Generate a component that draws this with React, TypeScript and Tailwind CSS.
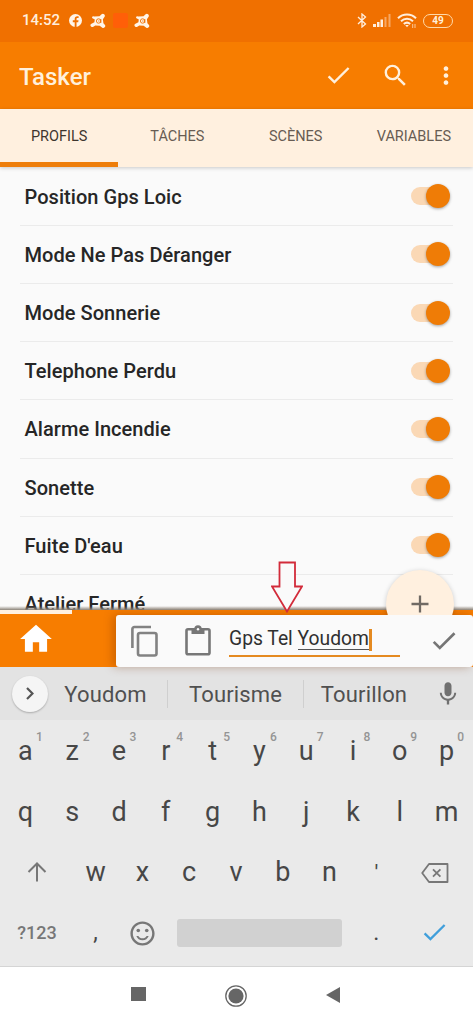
import { ReactNode } from "react";
import { MdSearch, MdMoreVert, MdHome, MdMic, MdOutlineSentimentSatisfiedAlt } from "react-icons/md";

const tabs = ["PROFILS", "TÂCHES", "SCÈNES", "VARIABLES"];

const profiles = [
  "Position Gps Loic",
  "Mode Ne Pas Déranger",
  "Mode Sonnerie",
  "Telephone Perdu",
  "Alarme Incendie",
  "Sonette",
  "Fuite D'eau",
  "Atelier Fermé",
];

const row1 = ["a", "z", "e", "r", "t", "y", "u", "i", "o", "p"];
const row2 = ["q", "s", "d", "f", "g", "h", "j", "k", "l", "m"];
const row3 = ["w", "x", "c", "v", "b", "n"];

const Check = ({ className, width = 2 }: { className: string; width?: number }) => (
  <svg viewBox="0 0 24 24" fill="none" stroke="currentColor" strokeWidth={width} className={className}>
    <path d="M2.5 12.8l5.6 5.6L21.7 4.800" />
  </svg>
);

const Avast = () => (
  <svg viewBox="0 0 16 16" className="h-4 w-4">
    <path
      d="M4.200 3.500L9.500 3.200 11.600 1.300A2 2 0 0 1 14.600 3.800L12.900 6.200 13.400 10.200 15 12A2 2 0 0 1 12.300 14.700L9.700 12.700 5.300 12.500 2.900 13.900A1.700 1.700 0 0 1 1.500 10.800L4.400 9.200 4.800 6.400 2.500 5.300A1.200 1.200 0 0 1 3.200 3.200z"
      fill="#fff5e8"
    />
    <circle cx="8.600" cy="8" r="2.200" fill="none" stroke="#f07000" strokeWidth=".9" />
    <path d="M8.200 8h1.300M10.800 6v4" stroke="#f07000" strokeWidth=".9" />
  </svg>
);

const StatusBar = () => (
  <div className="flex h-[42px] items-center justify-between bg-[#f07000] pb-px pl-[22px] pr-5 text-[#ffeedd]">
    <div className="flex items-center">
      <span className="w-[47px] text-[15px] font-medium">14:52</span>
      <svg viewBox="0 0 24 24" className="h-[13px] w-[13px]">
        <circle cx="12" cy="12" r="12" fill="#fff5e8" />
        <path d="M10.500 24v-9H7v-3.600h3.500V9c0-3.200 1.800-4.800 4.800-4.800h2.400v3.300h-1.900c-1.400 0-1.900.8-1.900 1.800v2.100h3.700l-.6 3.600h-3.100v9z" fill="#f07000" />
      </svg>
      <div className="ml-2"><Avast /></div>
      <div className="ml-[7px] h-[15px] w-[15px] rounded-[2px] bg-[#ff5f08]" />
      <div className="ml-[6px]"><Avast /></div>
    </div>
    <div className="flex items-center">
      <svg viewBox="0 0 10 15" className="h-[15px] w-[10px]" fill="none" stroke="currentColor" strokeWidth="1.300">
        <path d="M1 4l7.500 7L5 14V1l3.500 3L1 11" />
      </svg>
      <svg viewBox="0 0 18 13" className="ml-[6px] h-[13px] w-[18px]" fill="currentColor">
        <rect x="0" y="10" width="3" height="3" />
        <rect x="4" y="8" width="2.500" height="5" />
        <rect x="7.500" y="5.500" width="2.500" height="7.500" />
        <rect x="11.500" y="3" width="2" height="10" opacity=".45" />
        <rect x="15.500" y="0" width="2" height="13" opacity=".45" />
      </svg>
      <svg viewBox="0 0 20 15" className="ml-[6px] h-[15px] w-5" fill="none" stroke="currentColor" strokeWidth="2">
        <path d="M1 5.300c5-5 13-5 18 0M4 8.300c3.500-3.300 8.500-3.300 12 0M6.800 11c2-1.700 4.400-1.700 6.400 0" />
        <path d="M8.200 12h3.600L10 14.300z" fill="currentColor" stroke="none" />
        <path d="M15.700 11v4M18 11v4" strokeWidth="1" opacity=".7" />
      </svg>
      <div className="ml-[6px] flex h-[14px] w-[30px] items-center justify-center rounded-full border border-[#ffd9a8] bg-[#f07000] text-[10px] font-bold text-[#fff0dc]">
        49
      </div>
    </div>
  </div>
);

const Toolbar = () => (
  <div className="flex h-[67px] items-center bg-[#f77d00] pl-[19px] pr-[13px] text-[#fff0dc]">
    <h1 className="flex-1 pt-[2px] text-[24px] font-medium">Tasker</h1>
    <Check className="mr-[30px] h-[25px] w-[25px]" width={2.300} />
    <MdSearch className="mr-[22px] h-[29px] w-[29px]" />
    <MdMoreVert className="h-[29px] w-[28px]" />
  </div>
);

const Tabs = () => (
  <div className="relative z-10 flex h-[58px] bg-[#fff0df] shadow-[0_1px_4px_rgba(0,0,0,0.2)]">
    {tabs.map((tab, i) => (
      <div
        key={tab}
        className={
          i === 0
            ? "flex flex-1 items-center justify-center border-b-[5px] border-[#ee7e0b] pt-[2px] text-[14.500px] text-[#3d352e]"
            : "flex flex-1 items-center justify-center border-b-[5px] border-transparent pt-[2px] text-[14.500px] text-[#675c53]"
        }
      >
        {tab}
      </div>
    ))}
  </div>
);

const Toggle = () => (
  <div className="relative mb-px h-[18px] w-[38px] rounded-full bg-[#fad8b5]">
    <div className="absolute -right-px -top-[3px] h-6 w-6 rounded-full bg-[#ef7c06] shadow-[0_1px_3px_rgba(0,0,0,0.35)]" />
  </div>
);

const ProfileList = () => (
  <div className="relative h-[443px] overflow-hidden bg-[#fafafa] px-5 pt-[0.600px]">
    {profiles.map((name) => (
      <div key={name} className="flex h-[58.200px] items-center justify-between border-b border-[#ebebeb] pl-[4.500px] pr-1 pt-px">
        <span className="text-[20px] font-medium tracking-[0.05px] text-[#262626]">{name}</span>
        <Toggle />
      </div>
    ))}
    <div className="absolute inset-x-0 bottom-0 h-1 bg-linear-to-b from-transparent to-[#8b8378]" />
  </div>
);

// only the top of the button shows above the edit bar
const Fab = () => (
  <div className="absolute left-[380px] top-[565px] flex h-[50px] w-20 items-start justify-center overflow-hidden pt-[5px]">
    <div className="flex h-[68px] w-[68px] shrink-0 items-center justify-center rounded-full bg-[#fff0df] shadow-[0_1px_5px_rgba(0,0,0,0.2)]">
      <svg viewBox="0 0 18 18" className="h-[18px] w-[18px]" stroke="#706a64" strokeWidth="2.300">
        <path d="M9 0.500v17M0.500 9h17" />
      </svg>
    </div>
  </div>
);

const EditBar = () => (
  <div className="flex h-[57px] bg-[#f77d00]">
    <div className="relative flex w-[116px] shrink-0 items-center pl-[16px]">
      <div className="absolute left-0 top-0 h-1 w-[72px] bg-[#fff0df]" />
      <MdHome className="h-[38px] w-10 text-white" />
    </div>
    <div className="relative mt-[5px] flex flex-1 items-center rounded-[3px] bg-[#fafafa] shadow-[-3px_0_10px_rgba(120,50,0,0.35)]">
      <svg viewBox="0 0 28 32" className="ml-[14px] h-8 w-7 shrink-0" fill="none" stroke="#828282" strokeWidth="2.600">
        <path d="M2.400 23V4a2 2 0 0 1 2-2H21" />
        <rect x="8" y="8" width="18.500" height="22.500" rx="2" />
      </svg>
      <svg viewBox="0 0 26 31" className="ml-[27px] mb-[2px] h-[31px] w-[26px] shrink-0" fill="none" stroke="#777" strokeWidth="2.600">
        <rect x="1.500" y="4.200" width="23" height="25" rx="1.500" />
        <path d="M6.500 4.200h13V9h-13z" fill="#777" stroke="none" />
        <circle cx="13" cy="4" r="3.700" fill="#777" stroke="none" />
        <circle cx="13" cy="4.200" r="1.200" fill="#fafafa" stroke="none" />
      </svg>
      <div className="-mt-[2px] ml-[18px] flex h-[34px] w-[171px] shrink-0 items-center border-b-[2px] border-[#e58a20] pt-px text-[19.300px] text-[#303030]">
        <span className="whitespace-pre">Gps Tel </span>
        <span className="border-b border-[#555] leading-[20px]">Youdom</span>
        <span className="h-[22px] w-[3px] bg-[#e58a20]" />
      </div>
      <Check className="ml-[31px] h-[26px] w-[26px] shrink-0 text-[#757575]" width={2.500} />
    </div>
  </div>
);

const Suggestions = () => (
  <div className="flex h-[53px] items-center bg-[#e3e3e3] text-[22px] tracking-[0.150px] text-[#505050]">
    <div className="ml-3 flex h-9 w-9 shrink-0 items-center justify-center rounded-full bg-[#f5f5f5] shadow-[0_1px_2px_rgba(0,0,0,0.25)]">
      <svg viewBox="0 0 8 13" className="h-[13px] w-2" fill="none" stroke="#555" strokeWidth="2.200">
        <path d="M1 1l5.500 5.500L1 12" />
      </svg>
    </div>
    <div className="ml-[-4px] w-[123px] pt-[2px] text-center">Youdom</div>
    <div className="h-7 w-px bg-[#cfcfcf]" />
    <div className="w-[135px] pt-[2px] text-center">Tourisme</div>
    <div className="h-7 w-px bg-[#cfcfcf]" />
    <div className="w-[120px] pt-[2px] text-center">Tourillon</div>
    <MdMic className="ml-[10px] h-[28px] w-[28px] text-[#707070]" />
  </div>
);

const Key = ({ children, hint }: { children: ReactNode; hint?: number }) => (
  <div className="relative flex h-full w-[46.800px] items-center justify-center pt-[2px] text-[27px] text-[#474747]">
    {children}
    {hint !== undefined && <sup className="absolute right-[6px] top-[10px] text-[12px] font-medium leading-[14px] text-[#949494]">{hint}</sup>}
  </div>
);

const WideKey = ({ children }: { children: ReactNode }) => (
  <div className="flex h-full w-[70.200px] items-center justify-center pt-px text-[#777]">{children}</div>
);

const Keyboard = () => (
  <div className="h-[247px] border-b border-[#d5d5d5] bg-[#eaeaea] px-[2px]">
    <div className="flex h-[61px]">
      {row1.map((k, i) => (
        <Key key={k} hint={(i + 1) % 10}>{k}</Key>
      ))}
    </div>
    <div className="flex h-[60px]">
      {row2.map((k) => (
        <Key key={k}>{k}</Key>
      ))}
    </div>
    <div className="flex h-[61px]">
      <WideKey>
        <svg viewBox="0 0 20 20" className="h-5 w-5" fill="none" stroke="currentColor" strokeWidth="2">
          <path d="M10 19.500V2M1.500 10L10 1.500l8.500 8.500" />
        </svg>
      </WideKey>
      {row3.map((k) => (
        <Key key={k}>{k}</Key>
      ))}
      <Key>
        <span className="text-[22px]">'</span>
      </Key>
      <WideKey>
        <svg viewBox="0 0 28 20" className="mt-px h-5 w-7" fill="none" stroke="currentColor" strokeWidth="1.800" strokeLinejoin="round">
          <path d="M8 1h18.500v18H8L1.200 10z" />
          <path d="M12 6.300l7.400 7.400M19.400 6.300L12 13.700" />
        </svg>
      </WideKey>
    </div>
    <div className="flex h-[60px]">
      <WideKey>
        <span className="text-[18px] font-medium">?123</span>
      </WideKey>
      <Key>
        <span className="text-[23px]">,</span>
      </Key>
      <Key>
        <MdOutlineSentimentSatisfiedAlt className="h-[29px] w-[29px] text-[#777]" />
      </Key>
      <div className="flex w-[187.200px] items-center justify-center pt-px">
        <div className="h-7 w-[165px] rounded-[3px] bg-[#d1d1d1]" />
      </div>
      <Key>
        <span className="text-[23px]">.</span>
      </Key>
      <WideKey>
        <Check className="h-[25px] w-[25px] text-[#409fdb]" width={2.200} />
      </WideKey>
    </div>
  </div>
);

const NavBar = () => (
  <div className="flex h-[57px] items-center bg-white">
    <div className="mb-[3px] ml-[131px] h-[14px] w-[15px] bg-[#666]" />
    <svg viewBox="0 0 22 22" className="ml-[79px] h-[22px] w-[22px]">
      <circle cx="11" cy="11" r="10.200" fill="none" stroke="#666" strokeWidth="1.300" />
      <circle cx="11" cy="11" r="7.600" fill="#666" />
    </svg>
    <svg viewBox="0 0 14 16" className="mb-[2px] ml-[79px] h-4 w-[14px]" fill="#666">
      <path d="M14 0v16L0 8z" />
    </svg>
  </div>
);

export default function App() {
  return (
    <div className="relative h-[1024px] w-[473px] overflow-hidden font-['Roboto',sans-serif]">
      <StatusBar />
      <Toolbar />
      <Tabs />
      <ProfileList />
      <EditBar />
      <Suggestions />
      <Keyboard />
      <NavBar />
      <Fab />
      {/* pointer to the rename field */}
      <svg viewBox="0 0 32 52" className="absolute left-[271px] top-[561px] h-[52px] w-8" fill="#fafafa" stroke="#d22b3a" strokeWidth="1.800">
        <path d="M8.500 1.500h15.500v24h7L16 50.500 1 25.500h7.500z" />
      </svg>
    </div>
  );
}
